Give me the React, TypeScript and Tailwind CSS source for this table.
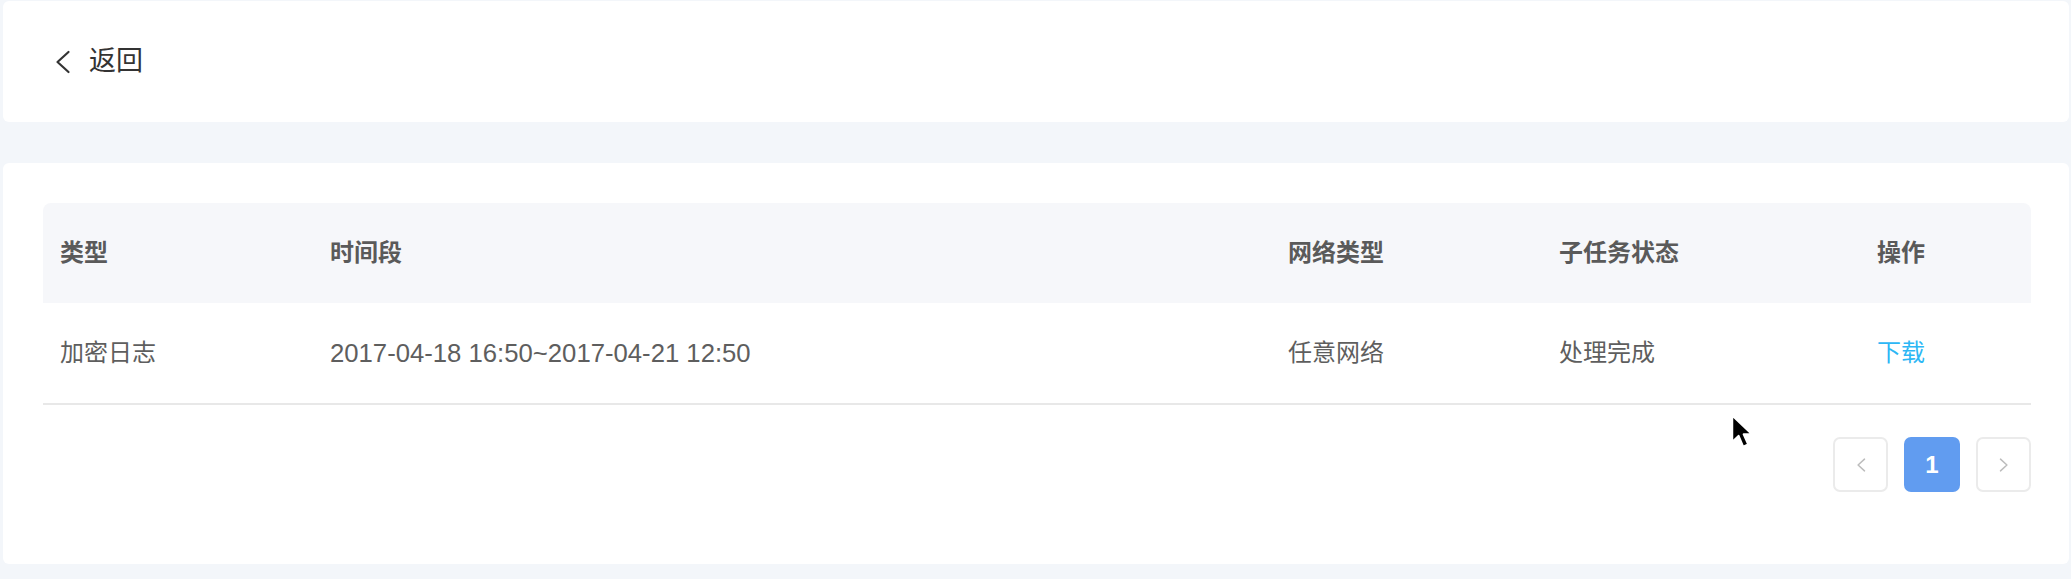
import React from "react";

const font = { fontFamily: '"Liberation Sans", "Noto Sans CJK SC", sans-serif' };

function Chevron({ dir, className, width = 2 }: { dir: "left" | "right"; className?: string; width?: number }) {
  return (
    <svg viewBox="0 0 16 24" className={className} fill="none" stroke="currentColor" strokeWidth={width} strokeLinecap="round" strokeLinejoin="round">
      {dir === "left" ? <path d="M14 2 L3 12 L14 22" /> : <path d="M2 2 L13 12 L2 22" />}
    </svg>
  );
}

export default function App() {
  return (
    <div className="relative min-h-[579px] w-full bg-[#f3f6fa] pt-[1px] pl-[3px] pr-[2px]" style={font}>
      <div className="flex h-[121px] items-center rounded-[6px] bg-white pl-[51px]">
        <Chevron dir="left" className="h-[24px] w-[17px] text-[#333]" width={2.2} />
        <span className="ml-[18px] text-[27px] text-[#333]">返回</span>
      </div>

      <div className="mt-[41px] rounded-[6px] bg-white pl-[40px] pr-[38px] pt-[40px] pb-[72px]">
        <div className="grid grid-cols-[270px_958px_271px_318px_1fr]">
          <div className="col-span-5 grid h-[100px] grid-cols-subgrid items-center rounded-t-[8px] bg-[#f6f7fa] text-[24px] font-bold text-[#5a5a5a]">
            <div className="pl-[17px]">类型</div>
            <div className="pl-[17px]">时间段</div>
            <div className="pl-[17px]">网络类型</div>
            <div className="pl-[17px]">子任务状态</div>
            <div className="pl-[17px]">操作</div>
          </div>
          <div className="col-span-5 grid h-[102px] grid-cols-subgrid items-center border-b-2 border-[#e8e8e8] text-[24px] text-[#5e5e5e]">
            <div className="pl-[17px]">加密日志</div>
            <div className="pl-[17px] text-[25.7px]">2017-04-18 16:50~2017-04-21 12:50</div>
            <div className="pl-[17px]">任意网络</div>
            <div className="pl-[17px]">处理完成</div>
            <div className="pl-[17px] text-[#2db7f5]">下载</div>
          </div>
        </div>

        <div className="mt-[32px] flex justify-end gap-[16px]">
          <div className="flex h-[55px] w-[55px] items-center justify-center rounded-[7px] border-2 border-[#ebebeb] bg-white">
            <Chevron dir="left" className="h-[14px] w-[10px] text-[#bdbdbd]" width={2.6} />
          </div>
          <div className="flex h-[55px] w-[56px] items-center justify-center rounded-[7px] bg-[#619cf0] text-[24px] font-bold text-white">
            1
          </div>
          <div className="flex h-[55px] w-[55px] items-center justify-center rounded-[7px] border-2 border-[#ebebeb] bg-white">
            <Chevron dir="right" className="h-[14px] w-[10px] text-[#bdbdbd]" width={2.6} />
          </div>
        </div>
      </div>

      <svg className="absolute left-[1730px] top-[414px] h-[36px] w-[24px]" viewBox="0 0 20 30">
        <path d="M2 1.5 L2 23 L7.2 18 L11 27 L15 25.3 L11.2 16.8 L18 16.8 Z" fill="#000" stroke="#fff" strokeWidth={1.4} strokeLinejoin="round" />
      </svg>
    </div>
  );
}
